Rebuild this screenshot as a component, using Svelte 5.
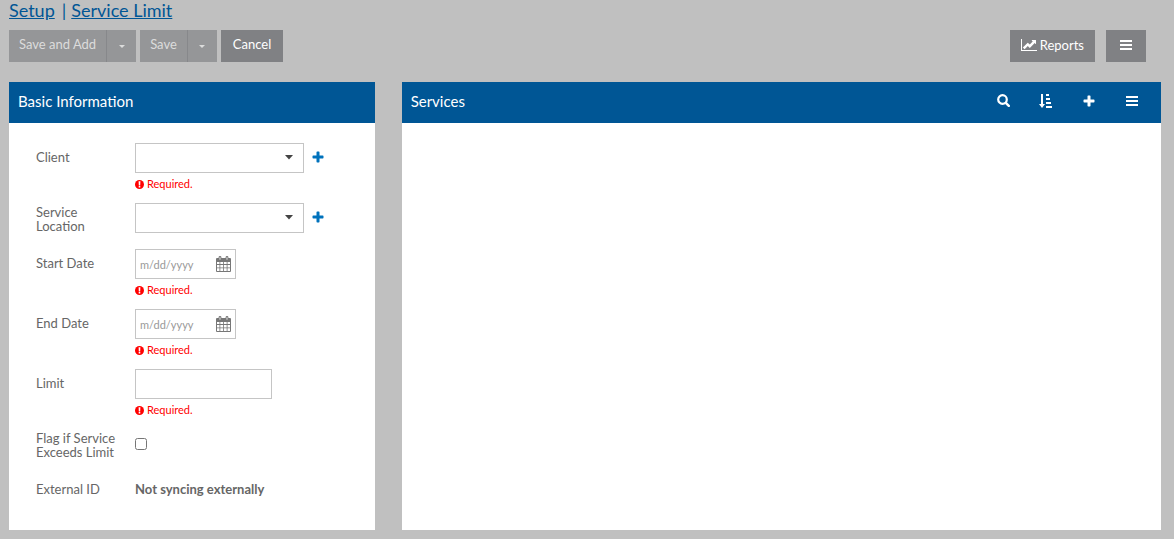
<script lang="ts">
  let client = $state("");
  let location = $state("");
  let startDate = $state("");
  let endDate = $state("");
  let limit = $state("");
  let flagged = $state(false);
</script>

{#snippet required(id)}
  <p class="error" {id}>
    <svg width="9" height="9" viewBox="0 0 9 9" aria-hidden="true">
      <circle cx="4.5" cy="4.5" r="4.5" fill="#f00" />
      <path d="M3.6 1.2h1.8l-.2 4.2H3.8zM3.7 6h1.6v1.5H3.7z" fill="#fff" />
    </svg>
    Required.
  </p>
{/snippet}

{#snippet plus()}
  <svg width="12" height="12" viewBox="0 0 12 12" aria-hidden="true">
    <path
      d="M5.2.5h1.6q.7 0 .7.7v3.3h3.3q.7 0 .7.7v1.6q0 .7-.7.7H7.5v3.3q0 .7-.7.7H5.2q-.7 0-.7-.7V7.5H1.2q-.7 0-.7-.7V5.2q0-.7.7-.7h3.3V1.2q0-.7.7-.7z"
      fill="currentColor"
    />
  </svg>
{/snippet}

{#snippet bars()}
  <svg width="12" height="10" viewBox="0 0 12 10" aria-hidden="true">
    <path d="M0 0h12v2H0zM0 4h12v2H0zM0 8h12v2H0z" fill="currentColor" />
  </svg>
{/snippet}

{#snippet calendar()}
  <svg width="15" height="16" viewBox="0 0 15 16" aria-hidden="true">
    <path
      fill-rule="evenodd"
      d="M1 2h1.6V1.3Q2.6 0 4 0t1.4 1.3V2h4.2v-.7Q9.6 0 11 0t1.4 1.3V2H14q1 0 1 1v12q0 1-1 1H1q-1 0-1-1V3q0-1 1-1zM3.6 1.3v2.4h.8V1.3zM10.6 1.3v2.4h.8V1.3zM1 6v2h2.5V6zM4.3 6v2h2.8V6zM7.9 6v2h2.8V6zM11.5 6v2H14V6zM1 9v2.4h2.5V9zM4.3 9v2.4h2.8V9zM7.9 9v2.4h2.8V9zM11.5 9v2.4H14V9zM1 12.3V15h2.5v-2.7zM4.3 12.3V15h2.8v-2.7zM7.9 12.3V15h2.8v-2.7zM11.5 12.3V15H14v-2.7z"
      fill="currentColor"
    />
  </svg>
{/snippet}

{#snippet caret()}
  <svg width="6" height="3" viewBox="0 0 6 3" aria-hidden="true">
    <path d="M0 0h6L3 3z" fill="currentColor" />
  </svg>
{/snippet}

<main>
  <nav class="crumbs" aria-label="Breadcrumb">
    <a href="#setup">Setup</a>
    <span>|</span>
    <a href="#service-limit">Service Limit</a>
  </nav>

  <div class="toolbar">
    <div class="split">
      <button type="button" class="bt" disabled>Save and Add</button>
      <button type="button" class="bt toggle" disabled aria-label="More save and add options">
        {@render caret()}
      </button>
    </div>
    <div class="split">
      <button type="button" class="bt" disabled>Save</button>
      <button type="button" class="bt toggle" disabled aria-label="More save options">
        {@render caret()}
      </button>
    </div>
    <button type="button" class="bt">Cancel</button>

    <div class="tools">
      <button type="button" class="bt">
        <svg width="16" height="12" viewBox="0 0 16 12" aria-hidden="true">
          <path
            d="M0 0h1v11h15v1H0zM15 1.3v3.4q0 .5-.4.2l-.9-.9-4.6 4.8q-.3.3-.6 0L6.8 7.100 3.600 10.300 1.800 8.500 6.500 3.900q.3-.3.600 0l1.700 1.700 2.900-3.100-.9-.9q-.3-.4.100-.6h3.800q.3 0 .3.300z"
            fill="currentColor"
          />
        </svg>
        Reports
      </button>
      <button type="button" class="bt menu" aria-label="Menu">{@render bars()}</button>
    </div>
  </div>

  <div class="panels">
    <section class="panel">
      <header>
        <h2>Basic Information</h2>
      </header>

      <form>
        <div class="row">
          <label for="client">Client</label>
          <div>
            <div class="control">
              <div class="select">
                <select id="client" bind:value={client} aria-describedby="client-error">
                  <option value=""></option>
                </select>
                <svg width="8" height="5" viewBox="0 0 8 5" aria-hidden="true">
                  <path d="M0 0h8L4 4.500z" fill="#444" />
                </svg>
              </div>
              <button type="button" class="add" aria-label="Add client">{@render plus()}</button>
            </div>
            {@render required("client-error")}
          </div>
        </div>

        <div class="row">
          <label for="location">Service Location</label>
          <div class="control">
            <div class="select">
              <select id="location" bind:value={location}>
                <option value=""></option>
              </select>
              <svg width="8" height="5" viewBox="0 0 8 5" aria-hidden="true">
                <path d="M0 0h8L4 4.500z" fill="#444" />
              </svg>
            </div>
            <button type="button" class="add" aria-label="Add location">{@render plus()}</button>
          </div>
        </div>

        <div class="row">
          <label for="start">Start Date</label>
          <div>
            <div class="date">
              <input id="start" type="text" placeholder="m/dd/yyyy" bind:value={startDate} aria-describedby="start-error" />
              <button type="button" aria-label="Pick start date">{@render calendar()}</button>
            </div>
            {@render required("start-error")}
          </div>
        </div>

        <div class="row">
          <label for="end">End Date</label>
          <div>
            <div class="date">
              <input id="end" type="text" placeholder="m/dd/yyyy" bind:value={endDate} aria-describedby="end-error" />
              <button type="button" aria-label="Pick end date">{@render calendar()}</button>
            </div>
            {@render required("end-error")}
          </div>
        </div>

        <div class="row">
          <label for="limit">Limit</label>
          <div>
            <input id="limit" class="limit" type="text" bind:value={limit} aria-describedby="limit-error" />
            {@render required("limit-error")}
          </div>
        </div>

        <div class="row">
          <label for="flag">Flag if Service Exceeds Limit</label>
          <div class="control">
            <input id="flag" type="checkbox" bind:checked={flagged} />
          </div>
        </div>

        <div class="row">
          <span class="name">External ID</span>
          <strong class="name">Not syncing externally</strong>
        </div>
      </form>
    </section>

    <section class="panel">
      <header>
        <h2>Services</h2>
        <div class="actions">
          <button type="button" aria-label="Search">
            <svg width="13" height="13" viewBox="0 0 13 13" aria-hidden="true">
              <circle cx="5.500" cy="5.500" r="4.300" fill="none" stroke="currentColor" stroke-width="2.200" />
              <path d="M8.800 8.800l3 3" stroke="currentColor" stroke-width="2.400" stroke-linecap="round" />
            </svg>
          </button>
          <button type="button" aria-label="Sort">
            <svg width="14" height="14" viewBox="0 0 14 14" aria-hidden="true">
              <path
                d="M2 0h2v10h2L3 14 0 10h2zM7 0h3v2H7zM7 4h4v2H7zM7 8h5v2H7zM7 12h6v2H7z"
                fill="currentColor"
              />
            </svg>
          </button>
          <button type="button" aria-label="Add service">{@render plus()}</button>
          <button type="button" aria-label="Services menu">{@render bars()}</button>
        </div>
      </header>
    </section>
  </div>
</main>

<style>
  :global(body) {
    background: #c0c0c0;
  }
  main {
    padding: 0 13px 9px 9px;
    font-family: Lato, "Open Sans", sans-serif;
    font-size: 13px;
    line-height: 14px;
    color: #666;
  }
  svg {
    display: block;
    flex: none;
  }
  button,
  input,
  select {
    font: inherit;
    box-sizing: border-box;
    margin: 0;
  }
  button {
    display: flex;
    align-items: center;
    justify-content: center;
    padding: 0;
    border: 0;
    background: none;
    color: inherit;
    cursor: pointer;
  }

  .crumbs {
    display: flex;
    gap: 5px;
    font-size: 18px;
    line-height: 20px;
    color: #005695;
  }
  .crumbs a {
    color: inherit;
  }
  .crumbs span {
    padding-left: 2px;
  }

  .toolbar {
    display: flex;
    gap: 4px;
    margin: 10px 0 20px;
  }
  .split {
    display: flex;
    gap: 1px;
    background: #87888b;
  }
  .bt {
    height: 32px;
    padding: 0 12px 4px;
    gap: 3px;
    background: #808184;
    color: #fff;
    white-space: nowrap;
  }
  .bt:disabled {
    padding: 0 10px 4px;
    background: #959698;
    color: #dcdcdc;
    cursor: default;
  }
  .bt.toggle {
    width: 29px;
    padding: 0;
  }
  .tools {
    display: flex;
    gap: 11px;
    margin-left: auto;
    margin-right: 15px;
  }
  .tools .bt {
    padding: 0 11px 3px;
  }
  .bt.menu {
    width: 40px;
  }

  .panels {
    display: grid;
    grid-template-columns: 13fr 27fr;
    gap: 27px;
  }
  .panel {
    background: #fff;
  }
  header {
    display: flex;
    align-items: center;
    justify-content: space-between;
    box-sizing: border-box;
    height: 41px;
    padding: 0 14px 4px 9px;
    background: #005695;
    color: #fff;
  }
  h2 {
    margin: 0;
    font-size: 15px;
    line-height: 18px;
    font-weight: 400;
  }
  .actions {
    display: flex;
    align-items: center;
    gap: 13px;
  }
  .actions button {
    width: 30px;
    height: 30px;
  }

  form {
    display: flex;
    flex-direction: column;
    gap: 12px;
    padding: 20px 27px 25px;
  }
  .row {
    display: grid;
    grid-template-columns: 83px 1fr;
    column-gap: 16px;
    align-items: start;
  }
  label,
  .name {
    display: flex;
    align-items: center;
    box-sizing: border-box;
    min-height: 30px;
    padding: 2px 0 4px;
  }
  .control {
    display: flex;
    align-items: center;
    min-height: 30px;
  }
  .select {
    position: relative;
    width: 169px;
  }
  .select svg {
    position: absolute;
    top: 12px;
    right: 11px;
    pointer-events: none;
  }
  select,
  .limit,
  .date {
    display: block;
    box-sizing: border-box;
    height: 30px;
    border: 1px solid #c5c5c5;
    border-radius: 0;
    background: #fff;
    color: #444;
  }
  select {
    width: 100%;
    appearance: none;
    padding: 0 24px 0 4px;
  }
  .limit {
    width: 137px;
    padding: 0 4px;
  }
  .date {
    display: flex;
    width: 101px;
  }
  .date input {
    flex: 1;
    min-width: 0;
    padding: 2px 0 0 4px;
    border: 0;
    background: none;
    font-size: 11px;
  }
  .date input::placeholder {
    color: #999;
  }
  .date button {
    width: 23px;
    color: #777;
  }
  .add {
    width: 28px;
    height: 30px;
    padding-bottom: 2px;
    color: #0072bc;
  }
  .error {
    display: flex;
    align-items: center;
    gap: 3px;
    margin: 4px 0 0;
    font-size: 11px;
    color: #f00;
  }
  input[type="checkbox"] {
    width: 12px;
    height: 12px;
  }
</style>
